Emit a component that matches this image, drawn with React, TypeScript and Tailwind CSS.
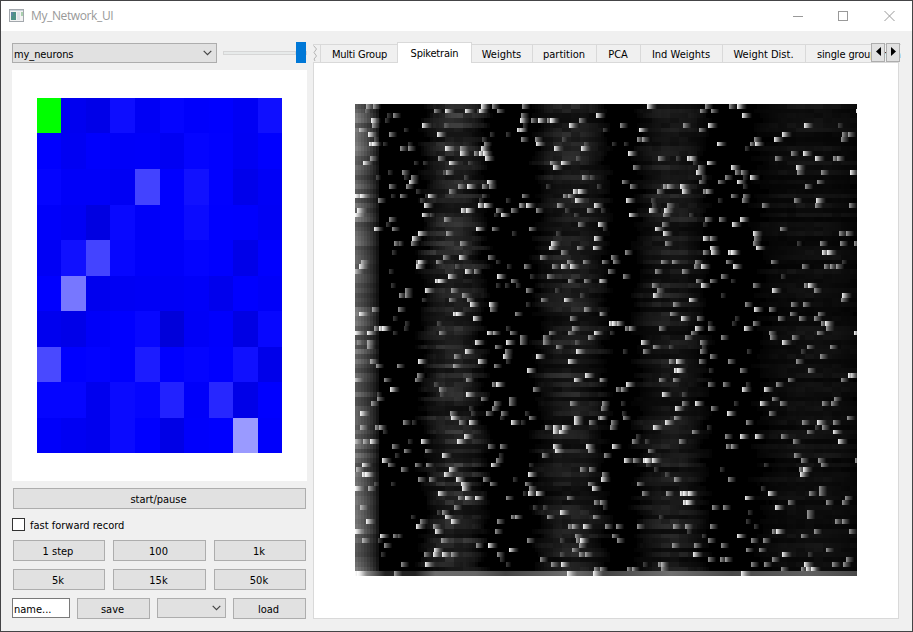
import React from "react";

/* ---------- activation grid ---------- */

const GRID: string[][] = [
  ["#00ff00", "#0000f0", "#0000e8", "#0d0dff", "#0000f5", "#0404ff", "#0000fc", "#0000ff", "#0000f5", "#0f0fff"],
  ["#0000ff", "#0000f3", "#0000fd", "#0000f9", "#0000fa", "#0000f3", "#0404ff", "#0101ff", "#0000f4", "#0000ff"],
  ["#0404ff", "#0000f9", "#0000f9", "#0000f4", "#4343ff", "#0000ff", "#1111ff", "#0101ff", "#0000eb", "#0000f7"],
  ["#0000fa", "#0000f5", "#0000e1", "#0808ff", "#0000f9", "#0000ff", "#0b0bff", "#0000ff", "#0000fe", "#0000f5"],
  ["#0000f5", "#1010ff", "#4444ff", "#0606ff", "#0000fb", "#0000fa", "#0303ff", "#0000ff", "#0000e9", "#0000ff"],
  ["#0000ff", "#7777ff", "#0000ee", "#0000f4", "#0000f6", "#0000f6", "#0000f9", "#0000ed", "#0000ff", "#0000f9"],
  ["#0000ef", "#0000e9", "#0000f9", "#0000ff", "#0707ff", "#0000da", "#0000f7", "#0000fd", "#0000e4", "#0707ff"],
  ["#4949ff", "#0000ff", "#0202ff", "#0000ff", "#1c1cff", "#0000ff", "#0404ff", "#0000ff", "#1010ff", "#0000ea"],
  ["#0505ff", "#0505ff", "#0000ee", "#0a0aff", "#0505ff", "#2222ff", "#0000fa", "#2727ff", "#0000e8", "#0000ff"],
  ["#0000fa", "#0000f3", "#0000ee", "#0a0aff", "#0000ff", "#0000e6", "#0000fc", "#0000ff", "#9a9aff", "#0000fb"],
];

const COL_EDGES = [0, 24, 49, 73, 98, 123, 147, 172, 196, 221, 245];
const ROW_EDGES = [0, 35, 71, 107, 142, 178, 213, 249, 284, 320, 355];

function ActivationGrid() {
  return (
    <svg width="245" height="355" viewBox="0 0 245 355" shapeRendering="crispEdges" className="block">
      {GRID.map((row, r) =>
        row.map((fill, c) => (
          <rect
            key={`${r}-${c}`}
            x={COL_EDGES[c]}
            y={ROW_EDGES[r]}
            width={COL_EDGES[c + 1] - COL_EDGES[c]}
            height={ROW_EDGES[r + 1] - ROW_EDGES[r]}
            fill={fill}
          />
        )),
      )}
    </svg>
  );
}

/* ---------- spike train raster ---------- */

/* Spikes per row: position in thirds of a pixel, then strength (a weak, b medium, c strong). */
type Block = { offset: number; first: number; rows: string[] };

const BLOCKS: Block[] = [
  {
    offset: -10,
    first: 0,
    rows: [
      "63b 84b 408c 441b", "60a 267b 300c 360c 396a 402c 456b", "126a 144b", "78c 120a", "81b 231c 297a",
      "42b 177a 516c", "69c 132b 276c 435a 483a", "87a 411a", "72c 81c 114a 189a 416b", "165b 189b 300c 345b 408c",
      "345c 387b 402c 414c", "75b 279b 420c", "54c 207a 234a 312c 369a", "", "129a 171b 294a 303b",
      "93a 177a 198b 357a", "192c 426c", "132b 183b 339b 366c 411b 432b", "213a 312b", "30c 45c 138a 165b 240a 249c 411a",
      "99b 225a 402a 483a", "237c 399c 417c 522b", "36c 348c 363c 453b 498b", "30c 231c 255a 447a 468c", "132b 297b",
      "123a", "87c 141b 393c 441b", "219c 303b 501a", "201c", "147b 162a 198b 345b",
      "", "141a",
      "294b 342c 429b 585b", "48b 213b 219c 273b 453a 666b 714b", "42c 213c 330a 486a 537b 621b 648c 675c", "30b 132a 360c 387b", "309c 456c 555a 606b",
      "270c 279c 498b 669b 717b 762b", "138a 453a 480a 513a", "180b 240c 318b 543b 630a", "162b 180b 351b 705a", "231a 312b 366b 588b 657c",
      "375c 432c 543a", "81b 159b 435b 717b", "42c 324c 333c 510b 762a", "144a 384c 675b", "180a 276a",
      "87b 102c 111c 177a 483a 681b", "30c 66c 144a 282b 426c 444b 495b 612b 669b 747c", "525b 594b 729b", "36a 66b 390c 483c 525b 594b 690a", "66b 450b 633b",
      "360c 480b 693c", "327b 474c 573c", "75b 219c 399c 483a 669c", "93b 156b 324b 447b", "546c",
      "216b 720c", "30b 117b 210b 363b 687c 762a", "267a 441b 453c", "135c 282b 564b", "96a 285a 363c",
      "96b 408b 492b", "78b 447b 492b 675b", "372a 441b", "45c 315b 378a 423b 468b 540a", "318c 465a 552b 687c 759b",
      "174b 201a 342b 372c 498c 528a 687c 732b", "45b 90b 102b 600b 624c 651c", "114a 624c 642c",
      "357c", "30b 54b 75c 189a 228c 336c", "141b 429b 465b 624c 723c", "177b 240b 630c 729b", "150a 291c 462a 591b",
      "111c 453b", "51c 129b 210b 243b 438c 552a", "33b 168b 312c 705b 732b", "51c 60c 297c 549c", "219b 252b 333c 414b 504a",
      "87a 138a 348c 435b 540b 729b", "30c 69b 351c 552b 741c", "279c 534a 549c 573c", "339b 360c 390c 483b 666b", "747b",
      "45b 327b 564a 594a", "276a 291b 645c", "198a 300c 498b 510b 606b 744b", "63c 225b 318c 456b", "213c 264b 669b 681b 714c",
      "30c 270c 450b", "105c 144b 159a 690b", "51b 99a 288b 546b 645a 693b 705c", "117b 393b 429c 702b", "267c 492c 681b",
      "108a 237b 264c 291c 318b 456b 645a 702b 720b", "465a 585b", "168b 240c 483a 618b 648c", "747b", "30c 36c 147b 666c 744c",
    ],
  },
  {
    offset: 165,
    first: 0,
    rows: [
      "6b 381c", "", "3b 228c", "0c 33b 54c 81b 90c 177b", "9a 147c 300b 489b",
      "0b 249a 357c", "", "3b 45b 126a 351b 366b", "48c 192a 276a 312a", "102c 183c",
      "324c", "168a 414b 468a 501c", "90b 123c", "99c 339b", "",
      "186b 210a", "306b", "78a 231a 330b 429b 441b 480c", "159c 174c 411b 486c", "6b 129b 144b",
      "165c 318c 393a", "0a 18c 111b 222c 396a 441b", "48b 135a 201b 243a 387c 432c", "162a 327c 429b 507a", "",
      "174b 234c 426b", "27b 249a 405c", "108a 429c", "222c", "93c 435b",
      "87c 171b 219c", "123b 315b",
    ],
  },
  {
    offset: 335,
    first: 0,
    rows: [
      "45b 117b 141c", "30b 63b 498c", "156c", "", "54c 342c 444a",
      "27b", "276c 456b 474b", "192b 252c 453b", "81c 180b 195c", "165a",
      "303b 339c", "0b 255b 375c 429b 441b", "9a 51c", "24b 123c 318c", "18c 135b 153b 321b 393b 480c",
      "36a 105b 159a 180c", "27b 84b 141c 381b", "159a 345b", "39b 48b", "123b 159b",
      "84a 156b 312b 378c", "216b 375b 477b", "", "", "45b 87b 150c",
      "39a 126c", "270b", "189c 447b 468b", "39c 60b 192b", "189b 321a 390b 450b 492b",
      "60c 198c", "39b 63c 114c 123c 396c 411c",
    ],
  },
  {
    offset: 245,
    first: 32,
    rows: [
      "33b", "6b 39b 183b 216b 285b 378b 513b 726a", "282b 303c 399c 606b 672b 690b 708b", "24b 165b 246b", "69b 363b 543a",
      "0b 288b 330b 393a", "156b 303c 459b 612b 624c", "171b 516c 642b", "159c 363a 726c", "267c 723b",
      "219b 435b 573b 609b", "462c 507b", "0b 210b 570b 654b", "243c 291b 405a 534b 597b 642b", "27c 36c 51b 324a 396a 459b 663b 675c",
      "75b 87b 177b 285c 324b 432c 678b", "30a 273b 507b 651b 762c", "255b 363b 510b 576b", "123c 300b 546c", "159b 207a 306a 621b 690b",
      "69a 129b 300b 441a 603a", "330b 660b", "207b 228c 297b 384b 588b", "", "222c 231c 327a 420b 624b",
      "744c 753b", "0b 177b 219b 564b 723b", "78c 324b 369b 438a 528b", "48b 63b 426c 492c", "186c 246a",
      "516b 702b", "6b 63a 246b 285c 402a 480c 540b 666b 693b", "3b 225c 333b", "66a 381c 507b", "0b 69b 222b 741b",
      "33b 195c 438b 606b 651c 699b", "30b 159c 321a 645a 666b", "276b 621b 699c",
      "108a 375b 420c 465c 543b", "96b 135a 237b 579b 714c", "36c 378b 393b", "144b", "12b 582b",
      "72c 99b 129c 135c 156c 603b 654b 765b", "138a 492a 663b", "162a 360a 597b 609c", "6b 195a 600c", "3c 222b 384b",
      "111b", "483a 657b", "126b 198b 240c 249c 264c 504c 627b 657b", "435c 735b", "0b 249c 258c 564b 678b 726b",
      "9a 336b 369b 525c", "444a 621b", "177a 621b", "438a 705b 726b", "15b 48b 111b 219b 255b 330b 462a",
      "261a 516b 528c 642b 747b", "36b 306a 411c 603b", "51b 324b 453b 489b", "216b 282b 363b", "438b 477b 678b",
      "279c 546c 624a", "324b 360b 375b 516b 738b", "129a 174b 183b 453b 492b 612c 696b 729b", "0b 81b 96b 183b 543b 603b 618c 633c", "423c",
    ],
  },
];

const ROW = 4.72;
const rowTop = (r: number) => Math.round(r * ROW);
const rowHeight = (r: number) => rowTop(r + 1) - rowTop(r);

const SPIKE_WIDTH: Record<string, number> = { a: 5, b: 8, c: 10 };

function noise(n: number) {
  const v = Math.sin(n * 127.1 + 11.7) * 43758.5453;
  return v - Math.floor(v);
}

/* Slow population waves behind the spikes: centre, half width, grey level. */
const WAVES = [
  [97, 33, 50],
  [215, 38, 38],
  [315, 38, 34],
  [455, 62, 19],
];

function level(x: number, r: number) {
  let v = x < 24 ? 108 * Math.pow(1 - x / 24, 0.75) * (0.7 + 0.5 * noise(r + 5)) : 0;
  WAVES.forEach(([centre, half, peak], k) => {
    const shift = (noise(r * 7 + k * 31) - 0.5) * 14;
    const d = Math.abs(x - centre - shift) / half;
    if (d < 1) v += peak * (1 - d * d) * (0.35 + 0.8 * noise(r * 3 + k * 57 + 2)) * (0.75 + 0.5 * noise(r * 91 + Math.floor(x / 9)));
  });
  return v;
}

function Raster() {
  const haze: React.ReactElement[] = [];
  for (let r = 0; r < 99; r++) {
    for (let x = 0; x < 502; x += 3) {
      const g = Math.round(level(x, r));
      if (g > 3) haze.push(<rect key={`${r}-${x}`} x={x} y={rowTop(r)} width="3" height={rowHeight(r)} fill={`rgb(${g},${g},${g})`} />);
    }
  }
  return (
    <svg width="502" height="472" viewBox="0 0 502 472" shapeRendering="crispEdges" className="block bg-black">
      <defs>
        <linearGradient id="a">
          <stop offset="0" stopColor="#fff" stopOpacity="0.25" />
          <stop offset="1" stopColor="#fff" stopOpacity="0.03" />
        </linearGradient>
        <linearGradient id="b">
          <stop offset="0" stopColor="#fff" stopOpacity="0.6" />
          <stop offset="0.4" stopColor="#fff" stopOpacity="0.3" />
          <stop offset="1" stopColor="#fff" stopOpacity="0.02" />
        </linearGradient>
        <linearGradient id="c">
          <stop offset="0" stopColor="#fff" stopOpacity="0.98" />
          <stop offset="0.2" stopColor="#fff" stopOpacity="0.7" />
          <stop offset="0.6" stopColor="#fff" stopOpacity="0.24" />
          <stop offset="1" stopColor="#fff" stopOpacity="0" />
        </linearGradient>
        <linearGradient id="last">
          <stop offset="0" stopColor="#c8c8c8" />
          <stop offset="0.06" stopColor="#222" />
          <stop offset="0.12" stopColor="#222" />
          <stop offset="0.16" stopColor="#6c6c6c" />
          <stop offset="0.24" stopColor="#666" />
          <stop offset="0.3" stopColor="#444" />
          <stop offset="0.43" stopColor="#707070" />
          <stop offset="0.5" stopColor="#444" />
          <stop offset="0.63" stopColor="#707070" />
          <stop offset="0.75" stopColor="#484848" />
          <stop offset="0.9" stopColor="#606060" />
          <stop offset="1" stopColor="#484848" />
        </linearGradient>
      </defs>
      {haze}
      <rect x="0" y={rowTop(99)} width="502" height={rowHeight(99)} fill="url(#last)" />
      {BLOCKS.map((block) =>
        block.rows.map((row, i) =>
          row
            .split(" ")
            .filter(Boolean)
            .map((mark) => {
              const kind = mark.slice(-1);
              const r = block.first + i;
              return (
                <rect
                  key={`${block.offset}-${r}-${mark}`}
                  x={Math.round(parseInt(mark, 10) / 3 + block.offset)}
                  y={rowTop(r)}
                  width={SPIKE_WIDTH[kind]}
                  height={rowHeight(r)}
                  fill={`url(#${kind})`}
                />
              );
            }),
        ),
      )}
    </svg>
  );
}

/* ---------- widgets ---------- */

function Chevron() {
  return (
    <svg width="9" height="6" viewBox="0 0 9 6" className="block shrink-0">
      <path d="M0.7 0.9 L4.5 4.7 L8.3 0.9" fill="none" stroke="#444" strokeWidth="1.2" />
    </svg>
  );
}

function Button({ children, className = "" }: { children: React.ReactNode; className?: string }) {
  return (
    <button className={`flex h-[21px] items-center justify-center border border-[#adadad] bg-[#e1e1e1] pt-[2px] pr-[2px] leading-none ${className}`}>
      {children}
    </button>
  );
}

function Tab({ label, className }: { label: string; className: string }) {
  return (
    <div className={`mt-[2px] flex h-[18px] shrink-0 items-center justify-center overflow-hidden whitespace-nowrap border-t border-r border-[#d9d9d9] pt-[2px] pr-px leading-[14px] ${className}`}>
      {label}
    </div>
  );
}

function TitleBar() {
  return (
    <header className="flex h-[30px] items-center bg-white pl-2 font-['Open_Sans','Noto_Sans',sans-serif] text-[12px] text-[#999]">
      <svg width="15" height="13" viewBox="0 0 15 13" className="mr-[7px] block -translate-y-px" shapeRendering="crispEdges">
        <rect x="0.5" y="0.5" width="14" height="12" fill="#f3f3f3" stroke="#a3a8ad" />
        <rect x="1" y="1" width="13" height="1" fill="#c9d2da" />
        <rect x="2" y="3" width="5" height="8" fill="#4f9187" />
        <rect x="2" y="3" width="2" height="4" fill="#5c86a0" />
        <rect x="8" y="3" width="3" height="8" fill="#dfe3e8" />
        <rect x="12" y="3" width="2" height="4" fill="#a9cfae" />
      </svg>
      <span className="leading-none tracking-[-0.38px]">My_Network_UI</span>
      <svg width="102" height="12" viewBox="0 0 102 12" className="mr-[17px] ml-auto block" fill="none" stroke="#999">
        <path d="M0 6.5 H10" />
        <rect x="45.5" y="1.5" width="9" height="9" />
        <path d="M91.5 1 L101.5 11 M101.5 1 L91.5 11" />
      </svg>
    </header>
  );
}

function LeftPanel() {
  return (
    <section className="flex w-[295px] flex-col">
      <div className="flex h-[21px]">
        <div className="mt-px flex h-5 w-[205px] items-center justify-between border border-[#adadad] bg-[#e1e1e1] pr-1 pl-px">
          <span className="pt-[2px] leading-none tracking-[-0.1px]">my_neurons</span>
          <Chevron />
        </div>
        <div className="ml-[6px] flex h-[21px] w-[84px] items-center">
          <div className="h-1 w-[73px] border border-[#d6d6d6] bg-[#e7eaea]" />
          <div className="h-[21px] w-[10px] bg-[#0078d7]" />
          <div className="h-1 w-px bg-[#d6d6d6]" />
        </div>
      </div>
      <div className="mt-[7px] h-[411px] bg-white pt-7 pl-[25px]">
        <ActivationGrid />
      </div>
      <Button className="mx-px mt-[7px]">start/pause</Button>
      <label className="mt-[9px] flex h-[13px] items-center gap-[5px]">
        <span className="h-[13px] w-[13px] border border-[#333] bg-white" />
        <span className="pt-[2px] leading-none">fast forward record</span>
      </label>
      <div className="mx-px mt-[9px] grid grid-cols-[92px_93px_92px] gap-x-2 gap-y-2">
        <Button>1 step</Button>
        <Button>100</Button>
        <Button>1k</Button>
        <Button>5k</Button>
        <Button>15k</Button>
        <Button>50k</Button>
      </div>
      <div className="mt-2 flex">
        <div className="flex h-5 w-[58px] items-center border border-[#7a7a7a] bg-white pt-[2px] pl-px leading-none">name...</div>
        <Button className="ml-[7px] w-[73px]">save</Button>
        <div className="ml-[7px] flex h-5 w-[69px] items-center justify-end border border-[#adadad] bg-[#e1e1e1] pr-1">
          <Chevron />
        </div>
        <Button className="ml-[7px] w-[73px]">load</Button>
      </div>
    </section>
  );
}

function ScrollButton({ path }: { path: string }) {
  return (
    <button className="flex h-[19px] w-[14px] items-center justify-center border border-[#adadad] bg-[#e1e1e1]">
      <svg width="5" height="9" viewBox="0 0 5 9" className="-translate-y-px">
        <path d={path} fill="#000" />
      </svg>
    </button>
  );
}

function RightPanel() {
  return (
    <section className="relative ml-[6px] flex w-[588px] flex-col">
      <div className="z-10 flex h-[21px] overflow-hidden">
        <div className="mt-[2px] h-[18px] w-2 shrink-0 border-r border-[#d9d9d9]">
          <svg width="7" height="18" viewBox="0 0 7 18" fill="none" stroke="#b4b4b4">
            <path d="M0 .5H7" stroke="#d9d9d9" />
            <path d="M.5 1.5 L3.5 5 L1 8.500 L3.500 12 L1 15 L2 17" />
          </svg>
        </div>
        <Tab label="Multi Group" className="w-[76px] border-r-0 pl-[2px] tracking-[-0.2px]" />
        <div className="flex h-[21px] w-[75px] shrink-0 items-center justify-center border border-b-0 border-[#d9d9d9] bg-white leading-none tracking-[-0.2px]">
          Spiketrain
        </div>
        <Tab label="Weights" className="w-[61px]" />
        <Tab label="partition" className="w-16" />
        <Tab label="PCA" className="w-11" />
        <Tab label="Ind Weights" className="w-[82px]" />
        <Tab label="Weight Dist." className="w-[83px]" />
        <div className="mt-[2px] flex h-[18px] w-[95px] shrink-0 items-center overflow-hidden border-t border-[#d9d9d9] pt-[2px] pl-[11px] leading-[14px] tracking-[-0.15px] whitespace-nowrap">
          single group mean
        </div>
      </div>
      <div className="-mt-px h-[557px] w-[586px] border border-[#d9d9d9] bg-white pt-[41px] pl-[41px]">
        <Raster />
      </div>
      <div className="absolute top-px right-[1px] z-20 flex gap-px">
        <ScrollButton path="M5 0 V9 L0 4.5 Z" />
        <ScrollButton path="M0 0 V9 L5 4.5 Z" />
      </div>
    </section>
  );
}

export default function App() {
  return (
    <main className="h-[632px] w-[913px] overflow-hidden border border-[#444446] bg-[#f0f0f0] font-['DejaVu_Sans_Condensed','DejaVu_Sans','Noto_Sans',sans-serif] text-[11px] text-black">
      <TitleBar />
      <div className="flex pt-[11px] pl-[11px]">
        <LeftPanel />
        <RightPanel />
      </div>
    </main>
  );
}
